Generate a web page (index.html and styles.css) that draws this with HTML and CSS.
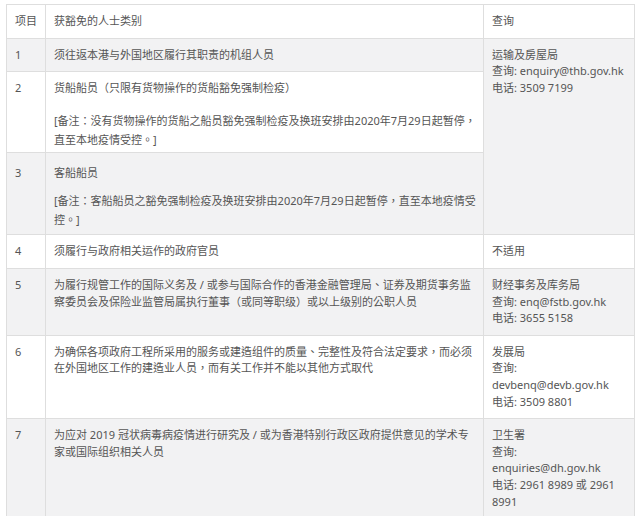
FILE: index.html
```
<!DOCTYPE html>
<html lang="zh-Hant">
<head>
    <meta charset="UTF-8">
    <meta name="viewport" content="width=device-width, initial-scale=1.0">
    <title>获豁免的人士类别</title>
    <link rel="stylesheet" href="styles.css">
</head>
<body>
    <div class="wrap">
        <table class="exempt">
            <colgroup>
                <col class="col-no">
                <col class="col-type">
                <col class="col-contact">
            </colgroup>
            <thead>
                <tr>
                    <th>项目</th>
                    <th>获豁免的人士类别</th>
                    <th>查询</th>
                </tr>
            </thead>
            <tbody>
                <tr class="alt">
                    <td>1</td>
                    <td>须往返本港与外国地区履行其职责的机组人员</td>
                    <td class="alt-cell" rowspan="3">运输及房屋局<br>查询: enquiry@thb.gov.hk<br>电话: 3509 7199</td>
                </tr>
                <tr class="has-note">
                    <td>2</td>
                    <td>
                        <p>货船船员（只限有货物操作的货船豁免强制检疫）</p>
                        <p class="note">[备注：没有货物操作的货船之船员豁免强制检疫及换班安排由2020年7月29日起暂停，<br>直至本地疫情受控。]</p>
                    </td>
                </tr>
                <tr class="alt has-note second-note">
                    <td>3</td>
                    <td>
                        <p>客船船员</p>
                        <p class="note">[备注：客船船员之豁免强制检疫及换班安排由2020年7月29日起暂停，直至本地疫情受<br>控。]</p>
                    </td>
                </tr>
                <tr>
                    <td>4</td>
                    <td>须履行与政府相关运作的政府官员</td>
                    <td>不适用</td>
                </tr>
                <tr class="alt">
                    <td>5</td>
                    <td>为履行规管工作的国际义务及 / 或参与国际合作的香港金融管理局、证券及期货事务监<br>察委员会及保险业监管局属执行董事（或同等职级）或以上级别的公职人员</td>
                    <td>财经事务及库务局<br>查询: enq@fstb.gov.hk<br>电话: 3655 5158</td>
                </tr>
                <tr>
                    <td>6</td>
                    <td>为确保各项政府工程所采用的服务或建造组件的质量、完整性及符合法定要求，而必须<br>在外国地区工作的建造业人员，而有关工作并不能以其他方式取代</td>
                    <td>发展局<br>查询:<br>devbenq@devb.gov.hk<br>电话: 3509 8801</td>
                </tr>
                <tr class="alt">
                    <td>7</td>
                    <td>为应对 2019 冠状病毒病疫情进行研究及 / 或为香港特别行政区政府提供意见的学术专<br>家或国际组织相关人员</td>
                    <td>卫生署<br>查询:<br>enquiries@dh.gov.hk<br>电话: 2961 8989 或 2961<br>8991</td>
                </tr>
            </tbody>
        </table>
    </div>
</body>
</html>
```

FILE: styles.css
```
html, body {
    overflow: hidden;
}

body {
    margin: 0;
    background-color: #fff;
    font-family: "Noto Sans", "Noto Sans CJK TC", sans-serif;
    font-size: 11px;
    color: #555;
}

.wrap {
    padding: 4px 6px 0 6px;
}

.exempt {
    width: 628px;
    border-collapse: collapse;
    table-layout: fixed;
}

.col-no {
    width: 39px;
}

.col-type {
    width: 438px;
}

.col-contact {
    width: 151px;
}

th,
td {
    border: 1px solid #dedede;
    padding: 8px 4px 8px 8px;
    line-height: 16.6px;
    text-align: left;
    vertical-align: top;
    font-weight: normal;
    white-space: nowrap;
}

.alt td,
.alt-cell {
    background-color: #f2f2f3;
}

p {
    margin: 0;
}

.has-note td {
    padding-bottom: 3px;
}

.note {
    margin-top: 14px;
    line-height: 19px;
}

.second-note td {
    padding-top: 12px;
    padding-bottom: 5px;
}

.second-note .note {
    margin-top: 10px;
}
```
